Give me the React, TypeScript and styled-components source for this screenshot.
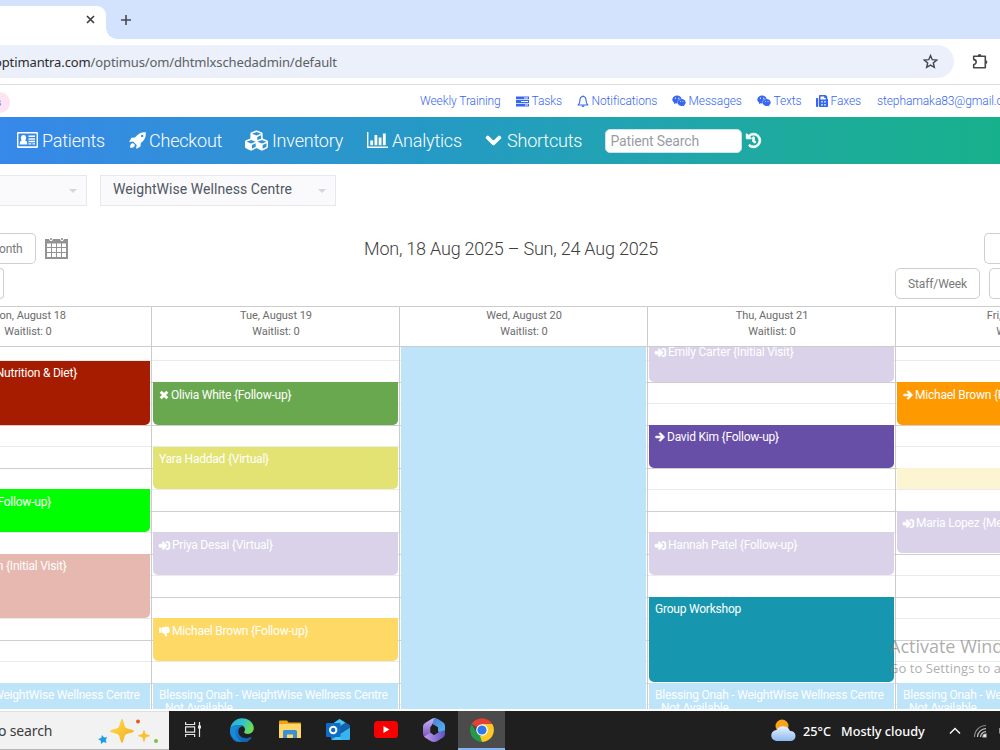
import React from "react";
import styled, { createGlobalStyle } from "styled-components";
import { FaArrowRight, FaChevronDown, FaCubes, FaFax, FaHistory, FaSignInAlt, FaWeixin } from "react-icons/fa";

const SLOT = 21.48;

const Global = createGlobalStyle`
  * { box-sizing: border-box; }
  body { margin: 0; background: #fff; font-family: Roboto, sans-serif; overflow: hidden; }
  svg { display: block; flex: none; }
`;

const Screen = styled.div`
  position: relative;
  width: 1000px;
  height: 750px;
  overflow: hidden;
  display: flex;
  flex-direction: column;
  background: #fff;
`;

/* Browser chrome */
const TabStrip = styled.div`
  height: 39px;
  flex: none;
  display: flex;
  align-items: flex-end;
  background: #d3e2fd;
`;
const Tab = styled.div`
  width: 106px;
  height: 33px;
  background: #fff;
  border-top-right-radius: 9px;
  display: flex;
  justify-content: flex-end;
  padding: 9px 11px 0 0;
`;
const TabFoot = styled.div`
  width: 11px;
  height: 11px;
  background: radial-gradient(circle at 100% 0, transparent 10.5px, #fff 11px);
`;
const NewTab = styled.div`
  height: 33px;
  padding: 8px 0 0 3px;
`;
const AddressRow = styled.div`
  height: 46px;
  flex: none;
  display: flex;
  align-items: flex-start;
  padding-top: 6px;
  border-bottom: 1px solid #dcdddf;
`;
const AddressBar = styled.div`
  width: 954px;
  height: 33px;
  background: #ebf0fa;
  border-radius: 0 17px 17px 0;
  display: flex;
  align-items: center;
  justify-content: space-between;
  padding-right: 16px;
  margin-right: 18px;
`;
const Url = styled.div`
  font: 13px/18px "Noto Sans", sans-serif;
  color: #5c5f64;
  margin-left: -6px;
  white-space: nowrap;
  letter-spacing: -0.12px;
  b { font-weight: 400; color: #2a2c2f; }
`;
const ExtIcon = styled.div`
  padding-top: 8px;
`;

/* Account links */
const LinkBar = styled.div`
  height: 32px;
  flex: none;
  display: flex;
  align-items: center;
`;
const Pill = styled.div`
  width: 10px;
  flex: none;
  height: 21px;
  border-radius: 0 11px 11px 0;
  background: #fde4f3;
  color: #8a63dd;
  font: 500 10px/21px Roboto, sans-serif;
  margin: 3px 410px 0 0;
  text-indent: -4px;
  overflow: hidden;
`;
const TopLink = styled.div<{ $w: number }>`
  width: ${(p) => p.$w}px;
  flex: none;
  display: flex;
  align-items: center;
  gap: 2.5px;
  color: #3767f0;
  font-weight: 300;
  font-size: 12px;
  letter-spacing: -0.1px;
  white-space: nowrap;
`;

/* Main navigation */
const Nav = styled.div`
  height: 47px;
  flex: none;
  display: flex;
  align-items: center;
  padding: 0 0 1px 17px;
  background: linear-gradient(90deg, #3788ea 0%, #2e93d0 28%, #2599c6 42%, #22a2b5 60%, #1dab9c 80%, #17b08c 100%);
  color: #fff;
`;
const NavItem = styled.div<{ $w: number; $gap: number }>`
  width: ${(p) => p.$w}px;
  flex: none;
  display: flex;
  align-items: center;
  gap: ${(p) => p.$gap}px;
  font-size: 18px;
  letter-spacing: -0.2px;
  font-weight: 300;
  white-space: nowrap;
`;
const Heavy = styled.span<{ $sw: number }>`
  display: inline-flex;
  flex: none;
  svg { stroke: currentColor; stroke-width: ${(p) => p.$sw}; overflow: visible; }
`;
const Search = styled.div`
  width: 137px;
  height: 24px;
  background: #fff;
  border: 1px solid #cfe0f3;
  border-radius: 5px;
  color: #999da3;
  font-size: 14px;
  line-height: 22px;
  padding-left: 4.500px;
  margin: 1px 4px 0 0;
  letter-spacing: -0.15px;
`;

/* Filters and calendar toolbar */
const Filters = styled.div`
  height: 69px;
  flex: none;
  display: flex;
  gap: 13px;
  padding-top: 11px;
`;
const Select = styled.div<{ $w: number; $open?: boolean }>`
  width: ${(p) => p.$w}px;
  height: 31px;
  border: 1px solid #e8e8ec;
  border-left-width: ${(p) => (p.$open ? 0 : 1)}px;
  background: #fafafc;
  display: flex;
  align-items: center;
  justify-content: space-between;
  padding: 0 9px 3px 12px;
  color: #51575f;
  font-size: 14px;
  letter-spacing: 0.06px;
`;
const Caret = styled.span`
  border: 4px solid transparent;
  border-top-color: #d6d6da;
  border-bottom: 0;
  margin: 3px 0 0 auto;
`;
const Toolbar = styled.div`
  height: 73px;
  flex: none;
  display: grid;
  grid-template-columns: 68px 1fr 120px;
  grid-template-rows: 31px 31px;
  row-gap: 4px;
`;
const ToolCell = styled.div<{ $end?: boolean }>`
  display: flex;
  align-items: center;
  gap: 9px;
  justify-content: ${(p) => (p.$end ? "flex-end" : "flex-start")};
`;
const Button = styled.div<{ $w: number; $edge?: "left" | "right" }>`
  width: ${(p) => p.$w}px;
  height: 31px;
  flex: none;
  border: 1px solid #cfcfcf;
  border-radius: ${(p) => (p.$edge === "left" ? "0 5px 5px 0" : p.$edge === "right" ? "5px 0 0 5px" : "5px")};
  ${(p) => (p.$edge ? `border-${p.$edge}: 0;` : "")}
  color: #7a7a7a;
  font-size: 12px;
  line-height: 30px;
  letter-spacing: -0.1px;
  text-align: ${(p) => (p.$edge ? "left" : "center")};
  white-space: nowrap;
`;
const MonthLabel = styled.span`
  margin-left: -1px;
`;
const RangeTitle = styled.div`
  text-align: center;
  font-size: 18px;
  font-weight: 300;
  letter-spacing: -0.22px;
  line-height: 31px;
  color: #404040;
  padding-left: 74px;
`;

/* Calendar */
const DayHeaders = styled.div`
  height: 41px;
  flex: none;
  display: flex;
  margin-left: -96px;
  border-top: 1px solid #ccc;
  border-bottom: 1px solid #ccc;
`;
const DayHeader = styled.div`
  width: 248px;
  flex: none;
  border-right: 1px solid #ccc;
  padding: 1px 0 0 1px;
  text-align: center;
  color: #6c6c6c;
  font-size: 11px;
  line-height: 15.500px;
  letter-spacing: -0.05px;
`;
const Calendar = styled.div`
  height: 362px;
  flex: none;
  overflow: hidden;
  display: flex;
  margin-left: -96px;
`;
const Day = styled.div`
  width: 248px;
  flex: none;
  height: ${SLOT * 18}px;
  margin-top: -8px;
  padding: 0 1px 0 1px;
  border-right: 1px solid #ccc;
  display: grid;
  grid-template-rows: repeat(18, ${SLOT}px);
  background: repeating-linear-gradient(
    to bottom,
    #cfcfcf 0, #cfcfcf 1px, #fff 1px, #fff ${SLOT}px,
    #ebebeb ${SLOT}px, #ebebeb ${SLOT + 1}px, #fff ${SLOT + 1}px, #fff ${SLOT * 2}px
  );
`;
const Event = styled.div<{ $from: number; $span: number; $bg: string; $tail?: boolean; $kind?: string }>`
  grid-column: 1;
  grid-row: ${(p) => p.$from + 1} / span ${(p) => p.$span};
  margin: ${(p) => (p.$kind === "block" ? "0" : "0.2px 0 0.3px 0")};
  background: ${(p) => p.$bg};
  border-radius: ${(p) => (p.$kind ? "0" : "0 0 5px 5px")};
  color: #fff;
  font-size: 12px;
  line-height: 14px;
  letter-spacing: -0.22px;
  padding: 5.400px 6px 0;
  display: flex;
  align-items: flex-start;
  justify-content: ${(p) => (p.$tail ? "flex-end" : "flex-start")};
  overflow: hidden;
  white-space: nowrap;
  svg { margin: 2px 2px 0 0; }
`;
const TailText = styled.div<{ $pad: number }>`
  padding-right: ${(p) => p.$pad}px;
`;
const Label = styled.div`
  small { display: block; font-size: 12px; padding-left: 6px; line-height: 13px; }
`;

const Watermark = styled.div`
  position: absolute;
  left: 889px;
  top: 634px;
  width: 111px;
  overflow: hidden;
  white-space: nowrap;
  font-family: "Open Sans", sans-serif;
  color: rgba(120, 120, 120, 0.62);
  font-size: 18px;
  line-height: 24px;
  small { display: block; font-size: 13px; line-height: 20px; letter-spacing: 0.05px; }
`;

/* Windows taskbar */
const Taskbar = styled.div`
  height: 39px;
  margin-top: 2px;
  flex: none;
  display: flex;
  background: #1f1f1f;
  color: #fff;
`;
const SearchBox = styled.div`
  width: 169px;
  background: #f2f2f2;
  border-top: 1px solid #e0e0e0;
  border-bottom: 1px solid #b8b8b8;
  display: flex;
  align-items: center;
  justify-content: space-between;
  padding-right: 9px;
  font: 14px/18px "Noto Sans", sans-serif;
  color: #3b3b3b;
`;
const SearchText = styled.span`
  margin-left: -2px;
  letter-spacing: -0.15px;
`;
const TaskButton = styled.div<{ $active?: boolean; $w?: number }>`
  width: ${(p) => p.$w ?? 48}px;
  display: flex;
  align-items: center;
  justify-content: center;
  background: ${(p) => (p.$active ? "#4b4b4b" : "transparent")};
  border-bottom: 2px solid ${(p) => (p.$active ? "#82b6f3" : "transparent")};
`;
const Tray = styled.div`
  margin-left: auto;
  width: 229px;
  flex: none;
  display: flex;
  align-items: center;
  font: 500 12.700px/18px "Noto Sans", sans-serif;
  white-space: nowrap;
  overflow: hidden;
`;
const Temp = styled.span`
  width: 38px;
  flex: none;
  margin-left: 7px;
`;
const Weather = styled.span`
  width: 108px;
  flex: none;
`;
const TrayGap = styled.span`
  width: 12px;
  flex: none;
`;

const PlusIcon = () => (
  <svg width="12" height="12" viewBox="0 0 12 12"><path d="M6 1v10M1 6h10" stroke="#474a4e" strokeWidth="1.600" /></svg>
);
const CloseIcon = () => (
  <svg width="9" height="9" viewBox="0 0 9 9"><path d="M1 1l7 7M8 1L1 8" stroke="#3c4043" strokeWidth="1.700" /></svg>
);
const StarIcon = () => (
  <svg width="15" height="15" viewBox="0 0 15 15"><path d="M7.500 1.600l1.750 4.100 4.450.4-3.380 2.930 1.020 4.350L7.500 11.050l-3.840 2.330 1.020-4.350L1.300 6.100l4.450-.4z" fill="none" stroke="#45484c" strokeWidth="1.400" /></svg>
);
const PuzzleIcon = () => (
  <svg width="17" height="17" viewBox="0 0 17 17">
    <path d="M1.700 3.300h11.600v11.400H1.700V11.500a2.400 2.400 0 000-4.900z" fill="none" stroke="#45484c" strokeWidth="1.600" strokeLinejoin="round" />
    <path d="M5.700 3a1.900 1.900 0 013.800 0zM13.500 7.200a1.900 1.900 0 010 3.800z" fill="#45484c" />
  </svg>
);
const TasksIcon = () => (
  <svg width="13" height="11" viewBox="0 0 13 11" fill="currentColor">
    <path fillRule="evenodd" d="M0 .5h13v2.800H0zM8 1.400v1h4v-1zM0 4.100h13v2.800H0zM5 5v1h7V5zM0 7.700h13v2.800H0zM9 8.600v1h3v-1z" />
  </svg>
);
const BellIcon = () => (
  <svg width="12" height="13" viewBox="0 0 12 13">
    <path d="M6 1.500C3.800 1.500 3 3.200 3 5c0 2.600-.8 3.900-1.900 5h9.800C9.800 8.900 9 7.600 9 5c0-1.800-.8-3.500-3-3.500z" fill="none" stroke="currentColor" strokeWidth="1.100" strokeLinejoin="round" />
    <path d="M5.400.5h1.200v1.200H5.400zM4.500 10.500h3a1.500 1.500 0 01-3 0z" fill="currentColor" />
  </svg>
);
const CardIcon = () => (
  <svg width="21" height="16" viewBox="0 0 21 16" fill="#fff">
    <path fillRule="evenodd" d="M1.200 0h18.600Q21 0 21 1.200v13.600q0 1.200-1.200 1.200H1.200Q0 16 0 14.800V1.200Q0 0 1.200 0zm.2 1.600v12.600h18.200V1.600z" />
    <path d="M2.800 12.500V11q0-2 2-2.400-.9-1-.9-2.900Q4 2.900 6.500 2.900t2.600 2.800q0 1.900-.9 2.900 2 .4 2 2.400v1.500zM11.500 3.600H18v1.500h-6.500zM11.500 6.200H18v1.500h-6.500zM11.500 8.800H18v1.500h-6.500zM11.500 11.200h2.800v1.300h-2.800zM15.500 11.200H18v1.300h-2.500z" />
  </svg>
);
const RocketIcon = () => (
  <svg width="17" height="17" viewBox="0 0 17 17" fill="#fff">
    <path fillRule="evenodd" d="M16.800.2c.3 4.500-1 7.600-5 10.800l-.3 3.600-3.800 2.200-.6-.5.600-3.200-3.600-3.600-3.300.6-.5-.6L2.500 5.700 6 5.500C9.200 1.500 12.300-.1 16.800.2zM13.200 2.700a1.200 1.200 0 100 2.400 1.200 1.200 0 000-2.400z" />
    <path d="M3.400 11.300c1.300-.2 2.700 1 2.400 2.500-.5 1.700-2.600 2-4.700 2 0-2.300.5-4.200 2.300-4.500z" />
  </svg>
);
const ChartIcon = () => (
  <svg width="21" height="16" viewBox="0 0 21 16" fill="#fff"><path d="M0 0h1.400v14.500H21V16H0zM3.300 8.500h2.800v4.800H3.300zM7.500 3h2.800v10.300H7.500zM11.700 5.500h2.800v7.800h-2.800zM15.900 1.500h2.800v11.800h-2.800z" /></svg>
);
const MonthGridIcon = () => (
  <svg width="23" height="21" viewBox="0 0 23 21">
    <path d="M0 1h4l1 2h2l1-2h7l1 2h2l1-2h4v20H0z" fill="#939393" />
    <path d="M5 0h2v2H5zM16 0h2v2h-2z" fill="#a8a8a8" />
    <path fill="#fff" d="M2 5.500h4v3.400H2zM7 5.500h4v3.400H7zM12 5.500h4v3.400h-4zM17 5.500h4v3.400h-4zM2 10h4v4H2zM7 10h4v4H7zM12 10h4v4h-4zM17 10h4v4h-4zM2 15h4v4H2zM7 15h4v4H7zM12 15h4v4h-4zM17 15h4v4h-4z" />
  </svg>
);
const CrossIcon = () => (
  <svg width="10" height="10" viewBox="0 0 10 10"><path d="M1.700 1.700l6.600 6.600M8.300 1.700L1.700 8.300" stroke="#fff" strokeWidth="2.900" /></svg>
);
const ThumbIcon = () => (
  <svg width="11" height="11" viewBox="0 0 12 11" fill="#fff">
    <path d="M0 1.200h2.400v5.600H0zM2.800 1.400C4.500.7 5.800.2 7.500.2h2q1.300 0 1.300 1.300.8.600.5 1.600.6.700.2 1.700.6 2-1.300 2.200H8.300q.9 2 .3 3.300-.5.800-1.700.5-.5-.6-.7-1.900Q4.800 7.600 4 6.900H2.800z" />
  </svg>
);
const Sparkles = () => (
  <svg width="62" height="26" viewBox="0 0 62 26">
    <defs><linearGradient id="gold" x2="1" y2="1"><stop stopColor="#ffdd55" /><stop offset="1" stopColor="#f2ac12" /></linearGradient></defs>
    <path d="M24 1c1.500 0 2 7 3.600 8.600C29.200 11.200 36 11.700 36 13.200s-6.800 1.900-8.400 3.400C26 18.200 25.500 25 24 25s-2-6.800-3.600-8.400c-1.500-1.500-8.400-1.900-8.400-3.400s6.900-2 8.400-3.600C22 8 22.500 1 24 1z" fill="url(#gold)" />
    <path d="M46 12c.8 0 1 3.300 1.700 4 .8.700 4.300.8 4.300 1.700s-3.500 1-4.300 1.700C47 20.100 46.800 24 46 24s-1-3.900-1.700-4.600c-.8-.7-4.300-.8-4.300-1.700s3.500-1 4.300-1.700C45 15.300 45.200 12 46 12z" fill="#fbc02d" />
    <path d="M4 17l2 2.500 3.200-.3L7.700 22l.9 3-3.100-1L3 26l-.2-3.300L0 21l3.200-.9z" fill="#1d9bea" />
    <circle cx="40" cy="3.500" r="2" fill="#e8591b" /><circle cx="58" cy="23" r="2" fill="#7cc142" />
  </svg>
);
const TaskViewIcon = () => (
  <svg width="18" height="17" viewBox="0 0 18 17" fill="none" stroke="#e6e6e6" strokeWidth="1.200">
    <path d="M1.600 1v2.500h9V1M1.600 16v-2.500h9V16M1.600 5.800h9v5.400h-9zM15.500 1v15" /><path d="M14 4.500h3v3h-3z" fill="#e6e6e6" stroke="none" />
  </svg>
);
const EdgeIcon = () => (
  <svg width="24" height="24" viewBox="0 0 24 24">
    <defs>
      <linearGradient id="edgeTop" x2="1" y2=".4"><stop stopColor="#27a9e8" /><stop offset=".55" stopColor="#31c5c9" /><stop offset="1" stopColor="#6bdc55" /></linearGradient>
      <linearGradient id="edgeLow" x2=".6" y2="1"><stop stopColor="#1b88dc" /><stop offset="1" stopColor="#1262b5" /></linearGradient>
    </defs>
    <path d="M.3 10.500C1.100 4.500 6 .2 12 .2c6.800 0 11.800 4.700 11.800 9.900 0 3.700-2.700 5.900-5.900 5.900-2.700 0-3.900-1-3.900-1.700 0-.7 1-1.100 1-2.900 0-2.500-2.400-4.400-5.800-4.400C5 7 1.800 8.700.3 10.500z" fill="url(#edgeTop)" />
    <path d="M.3 10.500C2 8.200 5.500 7 9.200 7c1.500 0 2.900.4 3.900 1-3.300.4-5 3-4.800 6 .3 4.500 5 6.900 9.300 6 1.500-.3 2.900-.9 3.700-.8.500.1.300.7 0 1.100A11.800 11.800 0 01.3 10.500z" fill="url(#edgeLow)" />
    <path d="M.3 10.500C2 8.200 5.500 7 9.200 7c-3 1.500-4.500 5-3.700 9 .7 3.400 2.900 6 6 7.800C5.300 23.700-.6 18 .3 10.500z" fill="#178bd8" />
  </svg>
);
const FolderIcon = () => (
  <svg width="22" height="19" viewBox="0 0 22 19">
    <path d="M0 1.500Q0 .5 1 .5h7l1.500 2H21q1 0 1 1V18H0z" fill="#e8a317" /><path d="M1 4h20q1 0 1 1v13H0V5q0-1 1-1z" fill="#ffd667" />
    <path d="M4 18v-6.500q0-1.500 1.500-1.500h11q1.500 0 1.500 1.500V18h-4v-3.500H8V18z" fill="#3b8fd4" />
  </svg>
);
const OutlookIcon = () => (
  <svg width="24" height="23" viewBox="0 0 24 23">
    <path d="M5 7l8.500-6L24 7.500V20q0 2-2 2H7q-2 0-2-2z" fill="#1a7fce" /><path d="M8 4.800L13.500 1l6 3.700L10 11z" fill="#49c4f5" /><path d="M19.500 4.700L24 7.500v3L13 17l-3-6z" fill="#1461ac" />
    <path d="M5 22l19-12v10q0 2-2 2z" fill="#43c8f5" /><path d="M24 10v10q0 2-2 2h-6L13 17z" fill="#37b4ee" />
    <rect y="5" width="14.500" height="14" rx="1" fill="#0f6cc8" /><circle cx="7.200" cy="12" r="3.200" fill="none" stroke="#fff" strokeWidth="2" />
  </svg>
);
const YoutubeIcon = () => (
  <svg width="24" height="17" viewBox="0 0 24 17"><rect width="24" height="17" rx="3.500" fill="#f90000" /><path d="M9.500 5l6 3.500-6 3.500z" fill="#fff" /></svg>
);
const OfficeIcon = () => (
  <svg width="22" height="24" viewBox="0 0 22 24">
    <defs>
      <linearGradient id="ofA" x2="0" y2="1"><stop stopColor="#c9b4f2" /><stop offset="1" stopColor="#7d55c4" /></linearGradient>
      <linearGradient id="ofB" x2="1" y2="1"><stop stopColor="#4b7fd6" /><stop offset="1" stopColor="#52b9ee" /></linearGradient>
      <linearGradient id="ofC" x2="1"><stop stopColor="#c79af0" /><stop offset="1" stopColor="#5a55bd" /></linearGradient>
    </defs>
    <path d="M13 .3L7.500 9.200V15L1 18.500Q0 17 0 15.500v-7Q0 6 2 5l7-4.300Q11-.2 13 .3z" fill="url(#ofA)" />
    <path d="M11 .2q2.300-.1 4 .9l5 3.200q2 1.200 2 3.500v8l-7-2.300V9.400L9.500 6z" fill="url(#ofB)" />
    <path d="M1 18.500l6.500-4L11 17l4-2.500L22 12v4q0 2-2 3.500l-6 3.700q-3 1.400-6 0l-6-3.700z" fill="url(#ofC)" />
    <path d="M7.500 9.200L11 7l4 2.400v5L11 17l-3.500-2.500z" fill="#1f1f1f" />
  </svg>
);
const ChromeIcon = () => (
  <svg width="24" height="24" viewBox="0 0 24 24">
    <path d="M12 12L1.700 6A12 12 0 0122.300 6z" fill="#e34133" /><path d="M12 12V6h10.300A12 12 0 0112 24z" fill="#fdc928" />
    <path d="M12 24A12 12 0 011.700 6l5.100 9L12 18l3-1z" fill="#229a4c" /><path d="M17.200 15L12 24l-2-6z" fill="#fdc928" />
    <circle cx="12" cy="12" r="5.800" fill="#fff" /><circle cx="12" cy="12" r="4.600" fill="#2f78ea" />
  </svg>
);
const WeatherIcon = () => (
  <svg width="25" height="23" viewBox="0 0 25 23">
    <defs><linearGradient id="cloud" y2="1" x2="0"><stop stopColor="#e8f2ff" /><stop offset="1" stopColor="#8db9ef" /></linearGradient></defs>
    <circle cx="11" cy="7" r="6.500" fill="#f9a31a" /><path d="M6 22a5.500 5.500 0 01-.5-11 7.500 7.500 0 0113.500 1 5 5 0 011 10z" fill="url(#cloud)" />
  </svg>
);
const UpIcon = () => (
  <svg width="12" height="8" viewBox="0 0 12 8"><path d="M1 6.500l5-5 5 5" fill="none" stroke="#fff" strokeWidth="1.400" /></svg>
);
const WifiIcon = () => (
  <svg width="14" height="14" viewBox="0 0 14 14" fill="none" stroke="#c8c8c8" strokeWidth="1.200">
    <path d="M1.500 13A11.500 11.500 0 0113 1.500" stroke="#8b8b8b" /><path d="M4.500 13A8.500 8.500 0 0113 4.700M7.500 13A5.500 5.500 0 0113 7.700" /><path d="M10 13a3 3 0 013-3v3z" fill="#fff" />
  </svg>
);
const BatteryIcon = () => (
  <svg width="10" height="14" viewBox="0 0 10 14" fill="none" stroke="#e0e0e0" strokeWidth="1.200"><path d="M1 4.500h9M1 4v5h9M3 1v3M6 1v3M3.500 9v4" /></svg>
);

const ArrowMark = () => <Heavy $sw={45}><FaArrowRight size={10} /></Heavy>;
const SignInMark = () => <Heavy $sw={25}><FaSignInAlt size={11} /></Heavy>;

const days = ["Mon, August 18", "Tue, August 19", "Wed, August 20", "Thu, August 21", "Fri, August 22"];
const BLUE = "#bee4fa";
const LILAC = "#d9d2e9";

const Unavailable = () => (
  <Event $from={16} $span={2} $bg={BLUE} $kind="block">
    <Label>Blessing Onah - WeightWise Wellness Centre<small>Not Available</small></Label>
  </Event>
);

export default function App() {
  return (
    <Screen>
      <Global />
      <TabStrip>
        <Tab><CloseIcon /></Tab>
        <TabFoot />
        <NewTab><PlusIcon /></NewTab>
      </TabStrip>
      <AddressRow>
        <AddressBar>
          <Url><b>optimantra.com</b>/optimus/om/dhtmlxschedadmin/default</Url>
          <StarIcon />
        </AddressBar>
        <ExtIcon><PuzzleIcon /></ExtIcon>
      </AddressRow>
      <LinkBar>
        <Pill>s</Pill>
        <TopLink $w={96}>Weekly Training</TopLink>
        <TopLink $w={61}><TasksIcon />Tasks</TopLink>
        <TopLink $w={95}><BellIcon />Notifications</TopLink>
        <TopLink $w={85}><FaWeixin size={14} />Messages</TopLink>
        <TopLink $w={59}><FaWeixin size={14} />Texts</TopLink>
        <TopLink $w={61}><FaFax size={12} />Faxes</TopLink>
        <TopLink $w={140}>stephamaka83@gmail.com</TopLink>
      </LinkBar>
      <Nav>
        <NavItem $w={112} $gap={4}><CardIcon />Patients</NavItem>
        <NavItem $w={116} $gap={3}><RocketIcon />Checkout</NavItem>
        <NavItem $w={122} $gap={4}><FaCubes size={23} />Inventory</NavItem>
        <NavItem $w={118} $gap={4}><ChartIcon />Analytics</NavItem>
        <NavItem $w={120} $gap={5}><Heavy $sw={35}><FaChevronDown size={17} /></Heavy>Shortcuts</NavItem>
        <Search>Patient Search</Search>
        <Heavy $sw={25}><FaHistory size={15} /></Heavy>
      </Nav>
      <Filters>
        <Select $w={87} $open><Caret /></Select>
        <Select $w={236}>WeightWise Wellness Centre<Caret /></Select>
      </Filters>
      <Toolbar>
        <ToolCell><Button $w={36} $edge="left"><MonthLabel>onth</MonthLabel></Button><MonthGridIcon /></ToolCell>
        <RangeTitle>Mon, 18 Aug 2025 – Sun, 24 Aug 2025</RangeTitle>
        <ToolCell $end><Button $w={16} $edge="right" /></ToolCell>
        <ToolCell><Button $w={4} $edge="left" /></ToolCell>
        <div />
        <ToolCell $end><Button $w={85}>Staff/Week</Button><Button $w={11} $edge="right" /></ToolCell>
      </Toolbar>
      <DayHeaders>
        {days.map((d) => (
          <DayHeader key={d}>{d}<br />Waitlist: 0</DayHeader>
        ))}
      </DayHeaders>
      <Calendar>
        <Day>
          <Event $from={1} $span={3} $bg="#a61c00" $tail><TailText $pad={67}>{"{Nutrition & Diet}"}</TailText></Event>
          <Event $from={7} $span={2} $bg="#00ff00" $tail><TailText $pad={93}>{"{Follow-up}"}</TailText></Event>
          <Event $from={10} $span={3} $bg="#e6b8af" $tail><TailText $pad={77.5}>{"n {Initial Visit}"}</TailText></Event>
          <Unavailable />
        </Day>
        <Day>
          <Event $from={2} $span={2} $bg="#6aa84f"><CrossIcon />{"Olivia White {Follow-up}"}</Event>
          <Event $from={5} $span={2} $bg="#e2e372">{"Yara Haddad {Virtual}"}</Event>
          <Event $from={9} $span={2} $bg={LILAC}><SignInMark />{"Priya Desai {Virtual}"}</Event>
          <Event $from={13} $span={2} $bg="#ffd966"><ThumbIcon />{"Michael Brown {Follow-up}"}</Event>
          <Unavailable />
        </Day>
        <Day>
          <Event $from={0} $span={18} $bg={BLUE} $kind="block" />
        </Day>
        <Day>
          <Event $from={0} $span={2} $bg={LILAC}><SignInMark />{"Emily Carter {Initial Visit}"}</Event>
          <Event $from={4} $span={2} $bg="#674ea7"><ArrowMark />{"David Kim {Follow-up}"}</Event>
          <Event $from={9} $span={2} $bg={LILAC}><SignInMark />{"Hannah Patel {Follow-up}"}</Event>
          <Event $from={12} $span={4} $bg="#1796b0">Group Workshop</Event>
          <Unavailable />
        </Day>
        <Day>
          <Event $from={2} $span={2} $bg="#ff9900"><ArrowMark />{"Michael Brown {Follow-up}"}</Event>
          <Event $from={6} $span={1} $bg="#fdf5d2" $kind="block" />
          <Event $from={8} $span={2} $bg={LILAC}><SignInMark />{"Maria Lopez {Medication}"}</Event>
          <Unavailable />
        </Day>
      </Calendar>
      <Watermark>Activate Windows<small>Go to Settings to activate Windows.</small></Watermark>
      <Taskbar>
        <SearchBox><SearchText>o search</SearchText><Sparkles /></SearchBox>
        <TaskButton $w={47}><TaskViewIcon /></TaskButton>
        <TaskButton $w={51}><EdgeIcon /></TaskButton>
        <TaskButton $w={46}><FolderIcon /></TaskButton>
        <TaskButton $w={49}><OutlookIcon /></TaskButton>
        <TaskButton $w={48}><YoutubeIcon /></TaskButton>
        <TaskButton $w={48}><OfficeIcon /></TaskButton>
        <TaskButton $w={47} $active><ChromeIcon /></TaskButton>
        <Tray>
          <WeatherIcon />
          <Temp>25°C</Temp>
          <Weather>Mostly cloudy</Weather>
          <UpIcon />
          <TrayGap />
          <WifiIcon />
          <TrayGap />
          <BatteryIcon />
        </Tray>
      </Taskbar>
    </Screen>
  );
}
